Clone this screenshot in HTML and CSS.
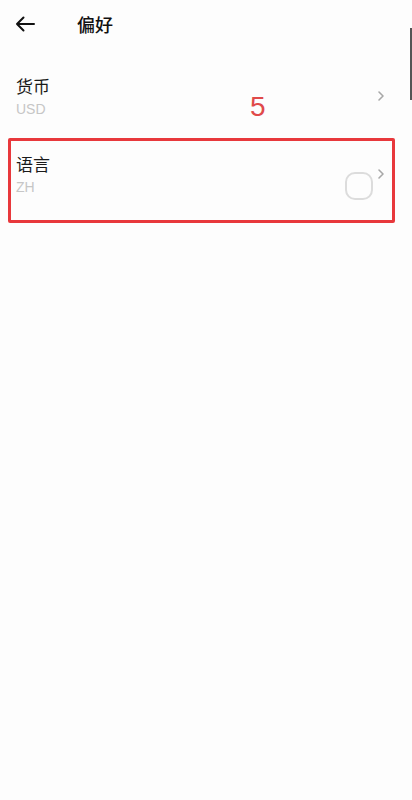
FILE: index.html
```html
<!DOCTYPE html>
<html lang="zh">
<head>
<meta charset="utf-8">
<link rel="stylesheet" href="styles.css">
</head>
<body>
<div class="page">
  <header class="topbar">
    <svg class="back" width="20" height="16" viewBox="0 0 20 16"><path d="M19 8H2M8.5 1.5L2 8l6.5 6.5" fill="none" stroke="#111" stroke-width="2" stroke-linecap="round" stroke-linejoin="round"/></svg>
    <h1 class="title">偏好</h1>
  </header>
  <div class="list">
    <div class="row">
      <div class="texts">
        <div class="label">货币</div>
        <div class="value">USD</div>
      </div>
      <svg class="chev" width="8" height="12" viewBox="0 0 8 12"><path d="M2 2l4 4-4 4" fill="none" stroke="#a8a8a8" stroke-width="1.6" stroke-linecap="round" stroke-linejoin="round"/></svg>
    </div>
    <div class="row">
      <div class="texts">
        <div class="label">语言</div>
        <div class="value">ZH</div>
      </div>
      <svg class="chev" width="8" height="12" viewBox="0 0 8 12"><path d="M2 2l4 4-4 4" fill="none" stroke="#a8a8a8" stroke-width="1.6" stroke-linecap="round" stroke-linejoin="round"/></svg>
    </div>
  </div>
  <div class="mark-num">5</div>
  <div class="mark-box"></div>
  <div class="touch"></div>
  <div class="scroll"></div>
</div>
</body>
</html>
```
FILE: styles.css
```css
html, body { margin: 0; padding: 0; }
body {
  background: #fdfdfd;
  font-family: "Noto Sans CJK SC", "Noto Sans", sans-serif;
  color: #1a1a1a;
}
.page { position: relative; width: 412px; height: 800px; overflow: hidden; }
.topbar { height: 48px; display: flex; align-items: center; padding-left: 15px; }
.back { display: block; }
.title { margin: 0 0 0 42px; font-size: 18px; font-weight: 500; line-height: 22px; color: #111; }
.list { padding-top: 0; }
.row {
  display: flex; align-items: center; justify-content: space-between;
  padding: 27px 27px 9px 16px; height: 42px;
}
.texts { display: flex; flex-direction: column; gap: 4px; }
.label { font-size: 17px; line-height: 22px; color: #1a1a1a; }
.value { font-family: "Liberation Sans", Arial, sans-serif; font-size: 14px; line-height: 16px; color: #c6c6c6; }
.chev { display: block; }
.mark-num {
  position: absolute; left: 250px; top: 91px;
  font-family: "Liberation Sans", Arial, sans-serif; font-size: 28px; line-height: 32px;
  color: #e04a4a;
}
.mark-box {
  position: absolute; left: 8px; top: 138px; width: 381px; height: 79px;
  border: 3px solid #e8383c; border-radius: 2px;
}
.touch {
  position: absolute; left: 345px; top: 172px; width: 24px; height: 24px;
  border: 2px solid #dcdcdc; border-radius: 10px;
}
.scroll {
  position: absolute; left: 410px; top: 28px; width: 2px; height: 72px;
  background: #555;
}
```
